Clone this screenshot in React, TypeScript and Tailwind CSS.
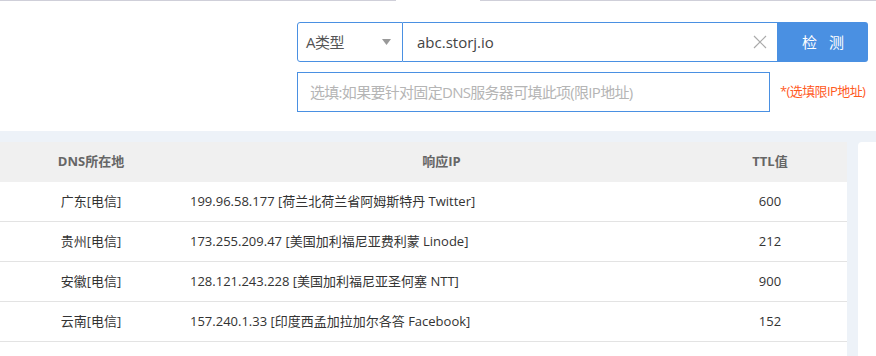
const rows = [
  { loc: "广东[电信]", ip: "199.96.58.177 [荷兰北荷兰省阿姆斯特丹 Twitter]", ttl: "600" },
  { loc: "贵州[电信]", ip: "173.255.209.47 [美国加利福尼亚费利蒙 Linode]", ttl: "212" },
  { loc: "安徽[电信]", ip: "128.121.243.228 [美国加利福尼亚圣何塞 NTT]", ttl: "900" },
  { loc: "云南[电信]", ip: "157.240.1.33 [印度西孟加拉加尔各答 Facebook]", ttl: "152" },
];

const font = {
  fontFamily: '"Open Sans", "Noto Sans CJK SC", sans-serif',
};

export default function App() {
  return (
    <div className="h-[356px] w-[876px] overflow-hidden bg-[#edf2f8]" style={font}>
      {/* query form */}
      <div className="relative h-[131px] bg-white">
        <div className="flex">
          <div className="h-px w-[396px] bg-[#cfcfd9]" />
          <div className="w-[84px]" />
          <div className="h-px flex-1 bg-[#cfcfd9]" />
        </div>
        <div className="pl-[297px] pt-[21px]">
          <div className="flex h-[40px]">
            <div className="flex w-[106px] items-center justify-between rounded-l-[3px] border border-[#4a90e2] pl-[8px] pr-[11px] text-[15px] tracking-[-0.5px] text-[#555]">
              <span>A类型</span>
              <svg width="9" height="6" viewBox="0 0 9 6">
                <path d="M0 0h9L4.5 6z" fill="#999" />
              </svg>
            </div>
            <div className="flex w-[375px] items-center justify-between border-y border-r border-[#4a90e2] pl-[14px] pr-[10px] text-[15px] text-[#444]">
              <span>abc.storj.io</span>
              <svg width="14" height="14" viewBox="0 0 14 14">
                <path d="M1 1l12 12M13 1L1 13" stroke="#aaa" strokeWidth="1.2" />
              </svg>
            </div>
            <button className="w-[90px] rounded-r-[3px] bg-[#4a90e2] text-[15px] tracking-[12px] text-white">
              <span className="pl-[12px]">检测</span>
            </button>
          </div>
          <div className="mt-[10px] flex h-[40px] items-center">
            <div className="flex h-full w-[473px] items-center border border-[#4a90e2] pl-[12px] text-[15px] tracking-[-0.7px] text-[#b5b5b5]">
              选填:如果要针对固定DNS服务器可填此项(限IP地址)
            </div>
            <span className="ml-[10px] whitespace-nowrap text-[13px] tracking-[-0.6px] text-[#ff5a1f]">
              *(选填限IP地址)
            </span>
          </div>
        </div>
      </div>

      {/* results */}
      <div className="flex pt-[11px]">
        <div className="w-[847px] bg-white text-[13px] text-[#333]">
          <div className="flex h-[40px] items-center bg-[#f0f0f0] font-bold text-[#666]">
            <div className="w-[182px] text-center">DNS所在地</div>
            <div className="w-[511px] pl-[8px] text-center">响应IP</div>
            <div className="w-[154px] text-center">TTL值</div>
          </div>
          {rows.map((r) => (
            <div key={r.ip} className="flex h-[40px] items-center border-b border-[#e3e3e3]">
              <div className="w-[182px] text-center">{r.loc}</div>
              <div className="w-[511px] pl-[8px]">{r.ip}</div>
              <div className="w-[154px] text-center">{r.ttl}</div>
            </div>
          ))}
        </div>
        <div className="ml-[11px] h-[220px] flex-1 rounded-tl-[4px] bg-white" />
      </div>
    </div>
  );
}
